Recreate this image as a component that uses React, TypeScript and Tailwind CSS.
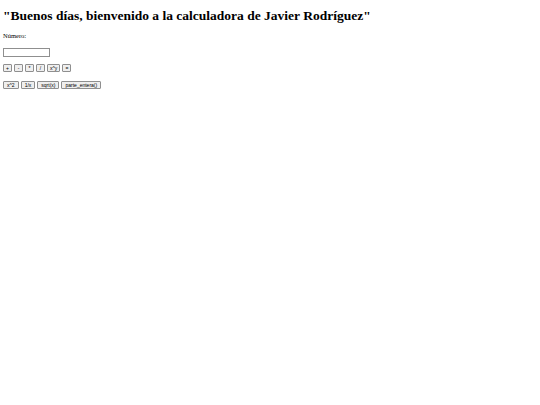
export default function App() {
  const ops = ["+", "-", "*", "/", "x^y", "="];
  const fns = ["x^2", "1/x", "sqrt(x)", "parte_entera()"];

  return (
    <div className="min-h-[405px] bg-white px-[3px] pt-[8px] text-black">
      <h1 className="font-['Liberation_Serif',serif] text-[13.5px] font-bold leading-[16px]">
        "Buenos días, bienvenido a la calculadora de Javier Rodríguez"
      </h1>
      <p className="mt-[7px] font-['Liberation_Serif',serif] text-[6.5px] leading-[9px]">Número:</p>
      <div className="mt-[8px]">
        <input className="block h-[9px] w-[47px] border border-[#8f8f8f] bg-white" />
      </div>
      <div className="mt-[7px] flex gap-[2px]">
        {ops.map((o) => (
          <button
            key={o}
            className="h-[8px] min-w-[9px] rounded-[1px] border border-[#8f8f8f] bg-[#efefef] px-[2px] font-['Liberation_Sans',sans-serif] text-[5px] leading-[6px]"
          >
            {o}
          </button>
        ))}
      </div>
      <div className="mt-[9px] flex gap-[2px]">
        {fns.map((f) => (
          <button
            key={f}
            className="h-[8px] rounded-[1px] border border-[#8f8f8f] bg-[#efefef] px-[3px] font-['Liberation_Sans',sans-serif] text-[5px] leading-[6px]"
          >
            {f}
          </button>
        ))}
      </div>
    </div>
  );
}
